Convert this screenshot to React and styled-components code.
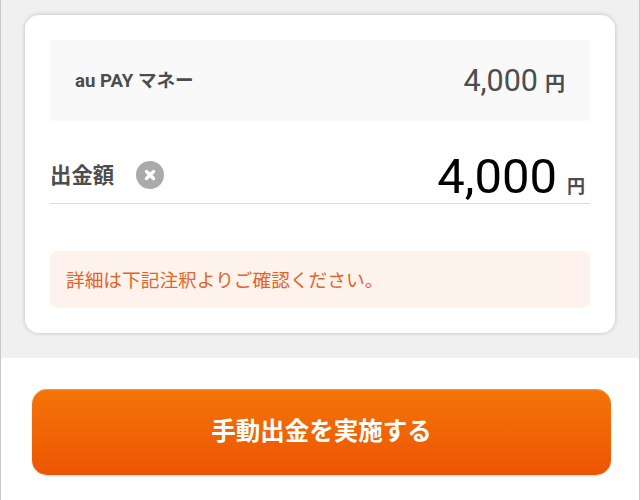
import React from "react";
import styled, { createGlobalStyle } from "styled-components";

const Global = createGlobalStyle`
  html, body { margin: 0; padding: 0; background: #fff; }
  body { font-family: Roboto, "Noto Sans CJK JP", sans-serif; }
`;
const Page = styled.div`
  width: 640px; height: 500px; box-sizing: border-box; overflow: hidden;
  border-left: 1px solid #c9c9c9; border-right: 1px solid #c9c9c9;
  display: flex; flex-direction: column; background: #fff;
`;
const Top = styled.section`
  height: 358px; box-sizing: border-box; padding: 15px 24px 0; background: #f0f0f0;
`;
const Card = styled.div`
  height: 318px; box-sizing: border-box; padding: 25px 25px 0; background: #fff;
  border-radius: 14px; box-shadow: 0 0 4px rgba(0,0,0,.22);
`;
const BalanceRow = styled.div`
  height: 81px; box-sizing: border-box; padding: 0 25px; background: #f9f9f9;
  display: flex; align-items: center; justify-content: space-between; color: #4d4d4d;
`;
const BalanceLabel = styled.span`
  font: 700 18.6px Roboto, "Noto Sans CJK JP", sans-serif; margin-top: -4px;
`;
const Amount = styled.span`
  display: flex; align-items: baseline; font-family: Roboto, "Noto Sans CJK JP", sans-serif;
  padding-right: ${p => p.$inset || 0}px; margin-top: ${p => p.$lift || 0}px;
`;
const BalanceValue = styled.span`
  font-size: 30.5px; font-weight: 400;
`;
const Yen = styled.span`
  font-size: ${p => p.$size}px; font-weight: 700; margin-left: ${p => p.$gap}px; color: #4d4d4d;
`;
const InputRow = styled.div`
  height: 83px; box-sizing: border-box; border-bottom: 1px solid #dcdcdc; padding-bottom: 3px;
  display: flex; align-items: flex-end; justify-content: space-between;
`;
const InputLeft = styled.div`
  display: flex; align-items: center; gap: 22px; margin-bottom: 11px;
`;
const InputLabel = styled.span`
  font: 700 21.4px "Noto Sans CJK JP", sans-serif; color: #4d4d4d; line-height: 28px; margin-top: -3px;
`;
const ClearIcon = styled.svg`
  width: 28px; height: 28px; display: block;
`;
const InputValue = styled.span`
  font-size: 49px; font-weight: 400; color: #000; line-height: 46px;
`;
const Notice = styled.p`
  margin: 47px 0 0; height: 57px; box-sizing: border-box; padding: 0 16px 3px;
  display: flex; align-items: center; background: #fef2ec; border-radius: 7px;
  font: 400 18.7px "Noto Sans CJK JP", sans-serif; color: #e0652b;
`;
const Bottom = styled.div`
  flex: 1; padding: 31px 28px 0 31px;
`;
const Button = styled.button`
  width: 100%; height: 86px; padding: 0 0 6px; border: 0; border-radius: 15px; color: #fff;
  display: flex; align-items: center; justify-content: center;
  background: linear-gradient(#f47508, #ec5502);
  box-shadow: inset 0 1px 1px rgba(255,255,255,.25), 0 1px 2px rgba(0,0,0,.15);
  font: 700 24.5px "Noto Sans CJK JP", sans-serif;
`;

export default function App() {
  return (
    <Page>
      <Global />
      <Top>
        <Card>
          <BalanceRow>
            <BalanceLabel>au PAY マネー</BalanceLabel>
            <Amount $lift={-1}>
              <BalanceValue>4,000</BalanceValue>
              <Yen $size={20} $gap={7}>円</Yen>
            </Amount>
          </BalanceRow>
          <InputRow>
            <InputLeft>
              <InputLabel>出金額</InputLabel>
              <ClearIcon viewBox="0 0 28 28" aria-hidden="true">
                <circle cx="14" cy="14" r="14" fill="#aaa" />
                <path d="M10.5 10.5l7 7M17.5 10.5l-7 7" stroke="#fff" strokeWidth="3.4" strokeLinecap="round" />
              </ClearIcon>
            </InputLeft>
            <Amount $inset={5}>
              <InputValue>4,000</InputValue>
              <Yen $size={18} $gap={10}>円</Yen>
            </Amount>
          </InputRow>
          <Notice>詳細は下記注釈よりご確認ください。</Notice>
        </Card>
      </Top>
      <Bottom>
        <Button>手動出金を実施する</Button>
      </Bottom>
    </Page>
  );
}
